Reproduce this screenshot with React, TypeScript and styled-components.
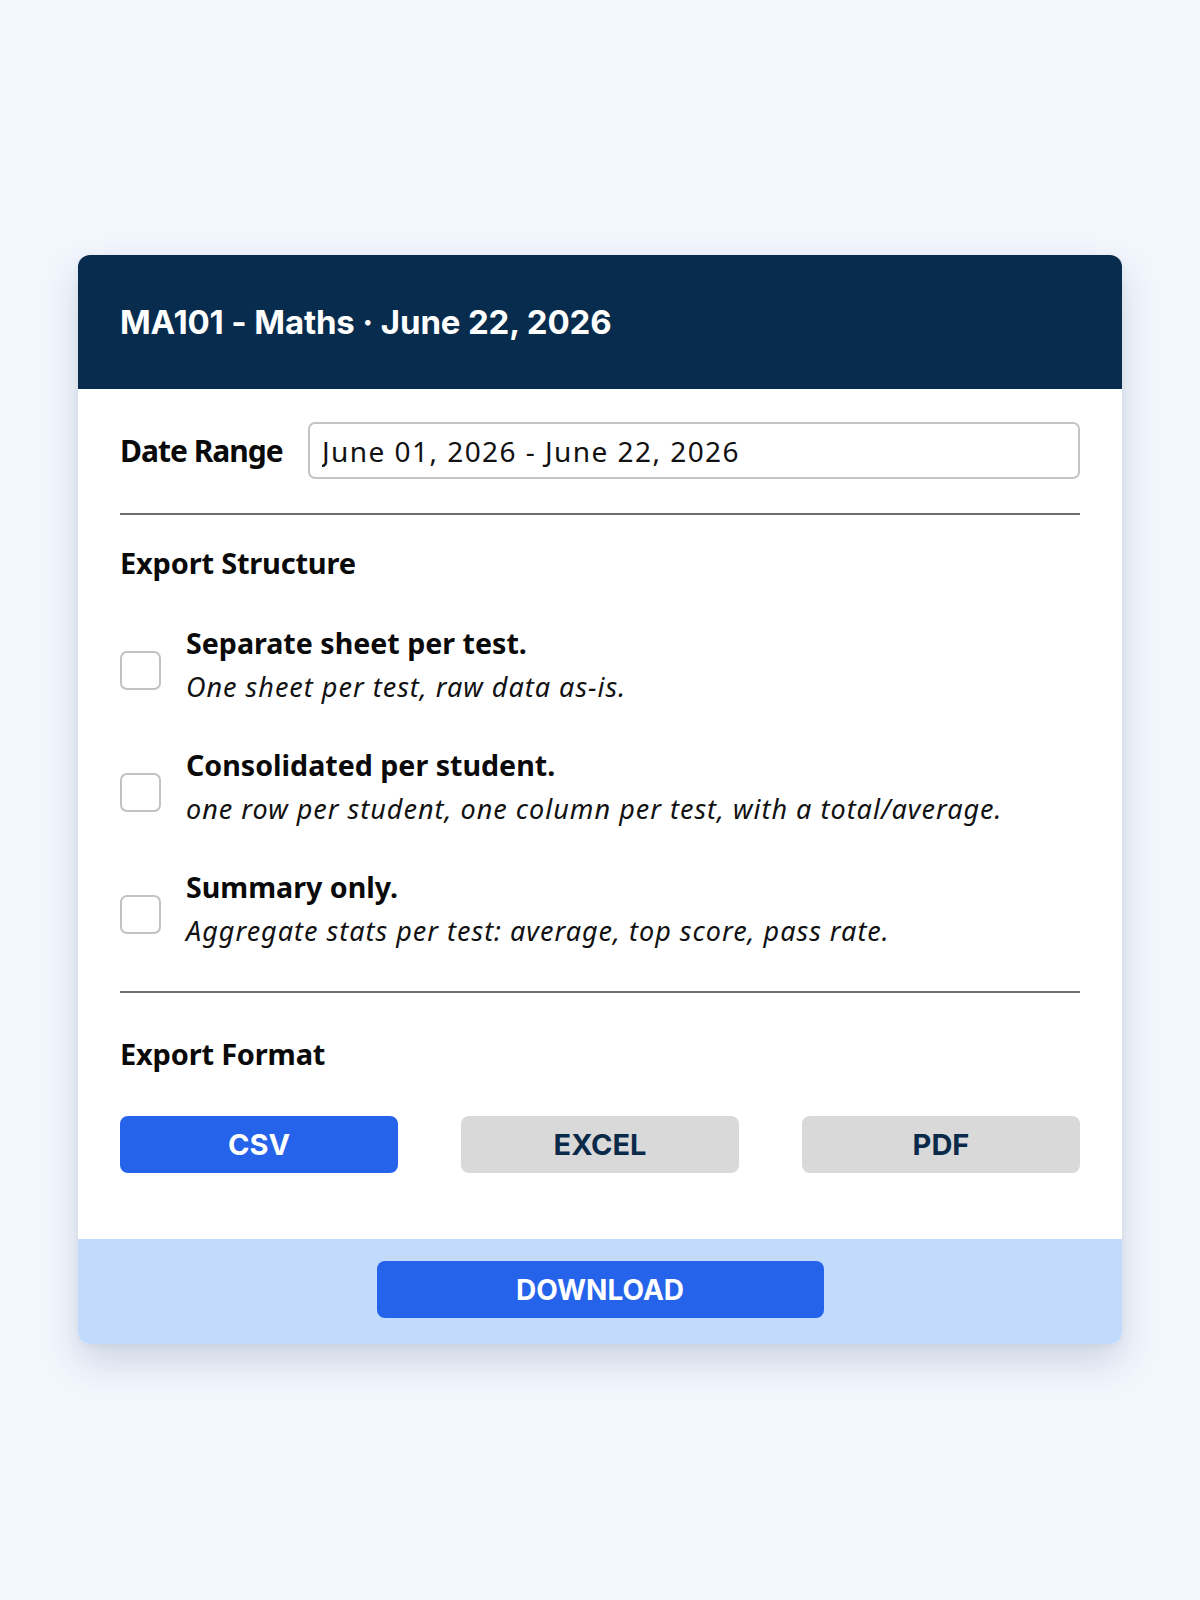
import React, { useState } from "react";
import styled, { createGlobalStyle } from "styled-components";

const GlobalStyle = createGlobalStyle`
  html, body {
    margin: 0;
    padding: 0;
    background: #f2f7fe;
  }
  body {
    font-family: "Noto Sans", "Open Sans", sans-serif;
    color: #0a0a0a;
  }
`;

const Page = styled.div`
  min-height: 1600px;
  display: flex;
  justify-content: center;
  align-items: flex-start;
  padding-top: 255px;
  box-sizing: border-box;
`;

const Card = styled.div`
  width: 1044px;
  background: #ffffff;
  border-radius: 12px;
  overflow: hidden;
  box-shadow: 0 18px 36px rgba(30, 50, 90, 0.17), 0 2px 6px rgba(30, 50, 90, 0.06);
`;

const Header = styled.div`
  height: 134px;
  background: #072c4d;
  display: flex;
  align-items: center;
  padding: 0 42px;
`;

const Title = styled.h1`
  margin: 0;
  font-family: Inter, "Noto Sans", sans-serif;
  font-weight: 700;
  font-size: 33px;
  color: #ffffff;
  letter-spacing: -0.15px;
`;

const Body = styled.div`
  padding: 33px 42px 66px;
`;

const DateRow = styled.div`
  display: flex;
  align-items: center;
  gap: 25px;
`;

const Label = styled.label`
  width: 163px;
  font-weight: 700;
  font-size: 30px;
  line-height: 34px;
  letter-spacing: -1px;
  white-space: nowrap;
`;

const DateInput = styled.input`
  flex: 1;
  height: 57px;
  box-sizing: border-box;
  border: 2px solid #c4c4c4;
  border-radius: 7px;
  padding: 0 12px;
  font-family: "Noto Sans", sans-serif;
  font-size: 28px;
  letter-spacing: 1.45px;
  color: #111;
  background: #fff;
  outline: none;
`;

const Divider = styled.hr<{ $top: number }>`
  border: none;
  height: 2px;
  background: #6e6e6e;
  margin: ${(p) => p.$top}px 0 0;
`;

const SectionTitle = styled.h2<{ $top: number }>`
  margin: ${(p) => p.$top}px 0 0;
  font-weight: 700;
  font-size: 29px;
  line-height: 34px;
  letter-spacing: -0.2px;
`;

const OptionList = styled.div`
  display: flex;
  flex-direction: column;
  gap: 44px;
  margin-top: 46px;
`;

const Option = styled.label`
  display: grid;
  grid-template-columns: 41px 1fr;
  column-gap: 25px;
  cursor: pointer;
`;

const Check = styled.input`
  appearance: none;
  margin: 25px 0 0;
  width: 41px;
  height: 39px;
  box-sizing: border-box;
  border: 2px solid #c2c2c2;
  border-radius: 7px;
  background: #fff;
  cursor: pointer;
  &:checked {
    background: #2563eb;
    border-color: #2563eb;
  }
`;

const OptionText = styled.div`
  display: flex;
  flex-direction: column;
  gap: 10px;
`;

const OptionTitle = styled.span`
  font-weight: 700;
  font-size: 28.6px;
  line-height: 34px;
`;

const OptionDesc = styled.span`
  font-style: italic;
  font-size: 27px;
  line-height: 34px;
  letter-spacing: 1px;
  color: #111;
`;

const FormatRow = styled.div`
  display: grid;
  grid-template-columns: repeat(3, 1fr);
  column-gap: 63px;
  margin-top: 45px;
`;

const FormatButton = styled.button<{ $active: boolean }>`
  height: 57px;
  border: none;
  border-radius: 8px;
  font-family: Inter, "Noto Sans", sans-serif;
  font-weight: 700;
  font-size: 29px;
  cursor: pointer;
  background: ${(p) => (p.$active ? "#2563eb" : "#d9d9d9")};
  color: ${(p) => (p.$active ? "#ffffff" : "#0b2a4a")};
`;

const Footer = styled.div`
  background: #c2dbfd;
  height: 105px;
  display: flex;
  justify-content: center;
  padding-top: 22px;
  box-sizing: border-box;
`;

const DownloadButton = styled.button`
  width: 447px;
  height: 57px;
  border: none;
  border-radius: 8px;
  background: #2563eb;
  color: #fff;
  font-family: Inter, "Noto Sans", sans-serif;
  font-weight: 700;
  font-size: 28px;
  cursor: pointer;
`;

const options = [
  { title: "Separate sheet per test.", desc: "One sheet per test, raw data as-is." },
  {
    title: "Consolidated per student.",
    desc: "one row per student, one column per test, with a total/average.",
  },
  { title: "Summary only.", desc: "Aggregate stats per test: average, top score, pass rate." },
];

const formats = ["CSV", "EXCEL", "PDF"];

export default function App() {
  const [format, setFormat] = useState("CSV");
  return (
    <>
      <GlobalStyle />
      <Page>
        <Card>
          <Header>
            <Title>MA101 - Maths · June 22, 2026</Title>
          </Header>
          <Body>
            <DateRow>
              <Label htmlFor="range">Date Range</Label>
              <DateInput id="range" readOnly defaultValue="June 01, 2026 - June 22, 2026" />
            </DateRow>
            <Divider $top={34} />
            <SectionTitle $top={31}>Export Structure</SectionTitle>
            <OptionList>
              {options.map((o) => (
                <Option key={o.title}>
                  <Check type="checkbox" />
                  <OptionText>
                    <OptionTitle>{o.title}</OptionTitle>
                    <OptionDesc>{o.desc}</OptionDesc>
                  </OptionText>
                </Option>
              ))}
            </OptionList>
            <Divider $top={43} />
            <SectionTitle $top={44}>Export Format</SectionTitle>
            <FormatRow>
              {formats.map((f) => (
                <FormatButton key={f} $active={f === format} onClick={() => setFormat(f)}>
                  {f}
                </FormatButton>
              ))}
            </FormatRow>
          </Body>
          <Footer>
            <DownloadButton>DOWNLOAD</DownloadButton>
          </Footer>
        </Card>
      </Page>
    </>
  );
}
